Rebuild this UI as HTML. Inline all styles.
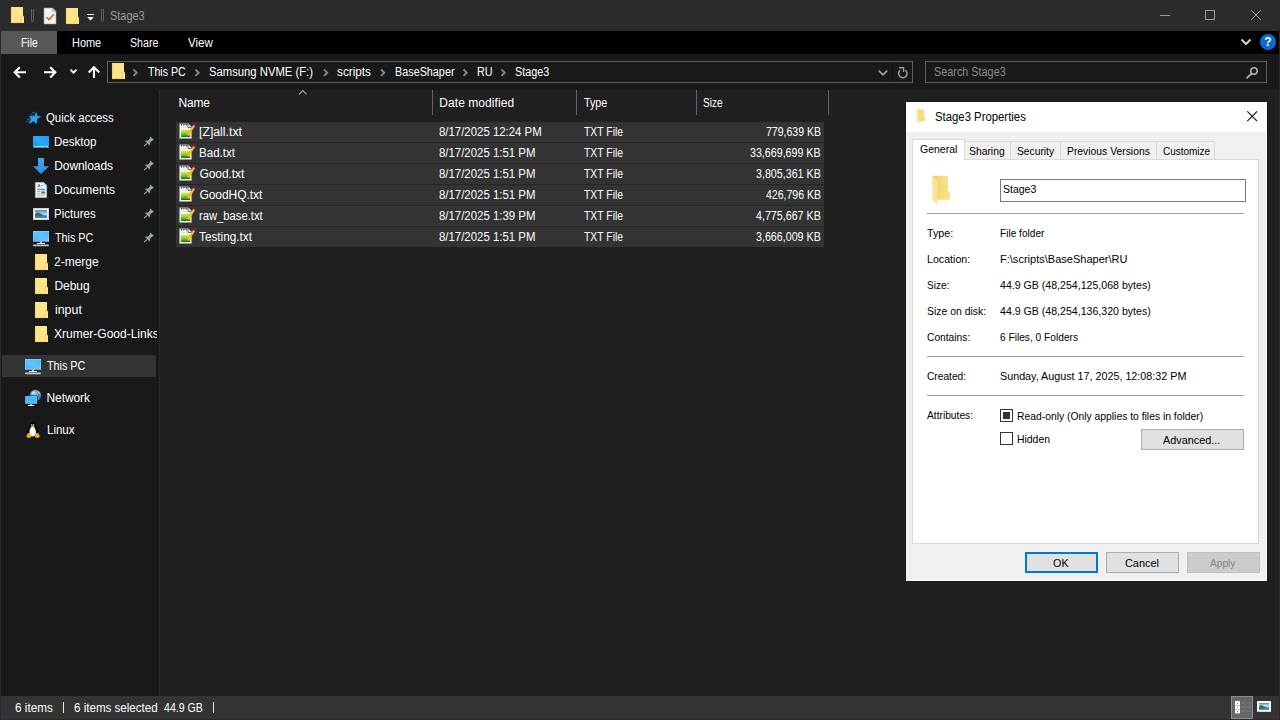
<!DOCTYPE html>
<html lang="en">
<head>
<meta charset="utf-8">
<title>Stage3</title>
<style>
*{box-sizing:border-box;margin:0;padding:0}
html,body{width:1280px;height:720px;overflow:hidden;background:#202020}
body{position:relative;font-family:"Liberation Sans",sans-serif;font-size:12px;color:#fff;line-height:16px}
.a{position:absolute}
.t{position:absolute;white-space:nowrap;line-height:16px;height:16px;transform-origin:0 0}
svg{position:absolute;overflow:visible}
#titlebar{left:0;top:0;width:1280px;height:31px;background:#2b2b2b}
#ribbon{left:1px;top:31px;width:1278px;height:23px;background:#000}
#filetab{left:1px;top:31px;width:56px;height:23px;background:#575757}
#navrow{left:1px;top:54px;width:1278px;height:36px;background:#191919}
#navpane{left:1px;top:90px;width:157px;height:606px;background:#191919;overflow:hidden}
#list{left:158px;top:90px;width:1121px;height:606px;background:#202020}
#status{left:1px;top:696px;width:1278px;height:23px;background:#333}
#frame{left:0;top:0;width:1280px;height:720px;border:1px solid #2b2b2b;border-top:0}
#addr{left:107px;top:61px;width:806px;height:22px;border:1px solid #5e5e5e}
#search{left:925px;top:61px;width:342px;height:22px;border:1px solid #5e5e5e}
.row{position:absolute;left:176px;width:648px;height:20px;background:#333}
.colsep{position:absolute;top:90px;width:1px;height:25px;background:#636363}
.navsel{left:2px;top:355px;width:154px;height:22px;background:#333}
#dlg{left:905px;top:101px;width:363px;height:481px;background:#181818}
#dlgin{left:1px;top:1px;width:361px;height:479px;background:#f0f0f0;border-right:1px solid #fff;border-bottom:1px solid #fff}
#dlgtitle{left:0;top:0;width:361px;height:30px;background:#fff}
.hr{position:absolute;left:927px;width:317px;height:1px;background:#a0a0a0}
.btn{position:absolute;height:21px;background:#e1e1e1;border:1px solid #adadad}
.cb{position:absolute;width:13px;height:13px;border:1px solid #333;background:#fff}
.tab{position:absolute;top:141px;height:18px;background:#f0f0f0;border:1px solid #d9d9d9;border-bottom:0}
</style>
</head>
<body>
<div class="a" id="titlebar"></div>
<div class="a" id="ribbon"></div>
<div class="a" id="filetab"></div>
<div class="a" id="navrow"></div>
<div class="a" id="navpane"></div>
<div class="a" id="list"></div>
<div class="a" id="status"></div>
<div class="a" id="frame"></div>
<div class="a" id="addr"></div>
<div class="a" id="search"></div>
<!-- title bar quick-access icons -->
<svg style="left:10px;top:6px" width="16" height="19" viewBox="0 0 16 19"><rect x="1" y="1" width="12" height="16" fill="#ffe48b"/><path d="M1.400 1v15.600H11" fill="none" stroke="#f5cd5a" stroke-width=".8"/><rect x="11.200" y="10.200" width="2.800" height="6.800" fill="#ffe793"/><path d="M11.200 17v-6.800h2.800" fill="none" stroke="#e6c25a" stroke-width=".7"/></svg>
<svg style="left:30px;top:8px" width="6" height="15" viewBox="0 0 6 15"><path d="M1.5 1v11.5a1 1 0 0 0 2 0V1" fill="none" stroke="#626262" stroke-width="1"/></svg>
<svg style="left:43px;top:7px" width="14" height="18" viewBox="0 0 14 18"><path d="M1 1h8.5l3.5 3.5V17H1z" fill="#f4f4f4" stroke="#9a9a9a" stroke-width=".6"/><path d="M9.5 1v3.5H13" fill="#dcdcdc" stroke="#9a9a9a" stroke-width=".6"/><path d="M3.3 10.2l2.6 2.4 5-5.4" fill="none" stroke="#f2581c" stroke-width="1.5"/></svg>
<svg style="left:65px;top:7px" width="16" height="19" viewBox="0 0 16 19"><rect x="1" y="1" width="12" height="16" fill="#ffe48b"/><path d="M1.400 1v15.600H11" fill="none" stroke="#f5cd5a" stroke-width=".8"/><rect x="11.200" y="10.200" width="2.800" height="6.800" fill="#ffe793"/><path d="M11.200 17v-6.800h2.800" fill="none" stroke="#e6c25a" stroke-width=".7"/></svg>
<svg style="left:86px;top:13px" width="9" height="9" viewBox="0 0 9 9"><rect x="1" y="1" width="7" height="1" fill="#fff"/><path d="M1.2 4h6.6L4.5 7.6z" fill="#fff"/></svg>
<svg style="left:100px;top:8px" width="6" height="15" viewBox="0 0 6 15"><path d="M1.5 1v11.5a1 1 0 0 0 2 0V1" fill="none" stroke="#626262" stroke-width="1"/></svg>
<!-- window controls -->
<svg style="left:1160px;top:10px" width="102" height="11" viewBox="0 0 102 11"><path d="M0 5.5h10" stroke="#9a9a9a" stroke-width="1"/><rect x="45.5" y=".5" width="9" height="9" fill="none" stroke="#9a9a9a" stroke-width="1"/><path d="M91 0l10 10M101 0L91 10" stroke="#9a9a9a" stroke-width="1"/></svg>
<!-- ribbon right -->
<svg style="left:1240px;top:38px" width="12" height="8" viewBox="0 0 12 8"><path d="M1.5 1.5L6 6l4.5-4.5" fill="none" stroke="#d4d4d4" stroke-width="2"/></svg>
<svg style="left:1260px;top:34px" width="16" height="16" viewBox="0 0 16 16"><circle cx="8" cy="8" r="8" fill="#0a6cd0"/><text x="8" y="12.3" font-family="Liberation Sans, sans-serif" font-size="12" font-weight="bold" fill="#fff" text-anchor="middle">?</text></svg>
<!-- nav arrows -->
<svg style="left:13px;top:66px" width="90" height="13" viewBox="0 0 90 13"><g fill="none" stroke="#fff" stroke-width="2.1"><path d="M13 6.3H2M6.8 1.2L1.7 6.3l5.1 5.1"/><path d="M31 6.3h11M37.2 1.2l5.100 5.1-5.100 5.100"/><path d="M81 12V1.500M75.700 6.500L81 1.200l5.300 5.300"/></g><path d="M57.500 3.600l3 3 3-3" fill="none" stroke="#f0f0f0" stroke-width="2"/></svg>
<!-- address bar folder + chevrons -->
<svg style="left:111px;top:62px" width="16" height="19" viewBox="0 0 16 19"><rect x="1" y="1" width="12" height="16" fill="#ffe48b"/><path d="M1.400 1v15.600H11" fill="none" stroke="#f5cd5a" stroke-width=".8"/><rect x="11.200" y="10.200" width="2.800" height="6.800" fill="#ffe793"/><path d="M11.200 17v-6.800h2.800" fill="none" stroke="#e6c25a" stroke-width=".7"/></svg>
<svg style="left:0;top:68px" width="560" height="10" viewBox="0 0 560 10"><g fill="none" stroke="#8a8a8a" stroke-width="1.800"><path d="M133.500 1.500l3.200 3.200-3.200 3.200"/><path d="M195.500 1.500l3.200 3.200-3.200 3.200"/><path d="M324 1.500l3.200 3.200-3.200 3.200"/><path d="M381 1.500l3.200 3.200-3.200 3.200"/><path d="M463.500 1.500l3.200 3.200-3.200 3.200"/><path d="M501.500 1.500l3.200 3.200-3.200 3.200"/></g></svg>
<!-- addr dropdown + refresh -->
<svg style="left:877px;top:66px" width="34" height="14" viewBox="0 0 34 14"><path d="M1.800 4.700l4.200 4.200 4.200-4.200" fill="none" stroke="#a2a2a2" stroke-width="1.700"/><path d="M15.500-4v20" stroke="#121212" stroke-width="1"/><path d="M28.300 4.100A4.200 4.200 0 1 1 23 4.400" fill="none" stroke="#9c9c9c" stroke-width="1.500"/><path d="M22.100 1.800H26.600V5.900" fill="none" stroke="#9c9c9c" stroke-width="1.400"/></svg>
<!-- search magnifier -->
<svg style="left:1245px;top:66px" width="14" height="14" viewBox="0 0 14 14"><circle cx="9" cy="5" r="3.200" fill="none" stroke="#b0b0b0" stroke-width="1.500"/><path d="M6.600 7.500L1.500 12.300" stroke="#b0b0b0" stroke-width="1.800"/></svg>
<!-- nav pane -->
<div class="a navsel"></div>
<div class="a" style="left:0;top:320px;width:157px;height:30px;overflow:hidden"><span class="t" style="left:54px;top:5.8px">Xrumer-Good-Links</span></div>
<svg style="left:26px;top:110px" width="17" height="16" viewBox="26 110 17 16"><path d="M36.5 111.6L37.3 115.9L41.3 116.2L37.1 119.0L36.7 123.9L33.4 121.2L29.0 123.9L30.9 119.0L28.7 116.2L34.3 115.9z" fill="#2aa5f4"/><path d="M32 112.400h3M30 114.400h3.500M27 119.400h3M26 121.500h3.500" stroke="#1878c0" stroke-width="1" opacity=".8"/></svg>
<svg style="left:33px;top:136px" width="16" height="12" viewBox="0 0 16 12"><defs><linearGradient id="gd" x1="0" y1="1" x2="1" y2="0"><stop offset="0" stop-color="#1598f4"/><stop offset=".5" stop-color="#29a8fb"/><stop offset="1" stop-color="#1b9ef8"/></linearGradient></defs><rect width="16" height="12" fill="url(#gd)"/><rect x="0" y="10" width="16" height="1.200" fill="#0f7fd6"/><rect x="2.500" y="10" width="9" height="1" fill="#a8dcff"/><rect x="1" y="10" width="1" height="1" fill="#fff"/><rect x="12.500" y="10" width="1" height="1" fill="#fff"/><rect x="14" y="10" width="1" height="1" fill="#fff"/></svg>
<svg style="left:33px;top:158px" width="16" height="16" viewBox="0 0 16 16"><defs><linearGradient id="gdl" x1="0" y1="0" x2="0" y2="1"><stop offset="0" stop-color="#4aa3ee"/><stop offset="1" stop-color="#2a8ae2"/></linearGradient></defs><path d="M5 0h6v8.300h5L8 16 0 8.300h5z" fill="url(#gdl)"/></svg>
<svg style="left:35px;top:182px" width="12" height="16" viewBox="0 0 12 16"><path d="M.4.400h8.200l3 3V15.600H.4z" fill="#fbfbfb" stroke="#b9b9b9" stroke-width=".8"/><path d="M8.600.400v3h3" fill="#e4e4e4" stroke="#b9b9b9" stroke-width=".6"/><path d="M2.600 5.300l1.300-3.200 1.300 3.200M3.100 4.200h1.700" fill="none" stroke="#1e7fd8" stroke-width=".9"/><rect x="5.800" y="3.300" width="2" height=".8" fill="#4a9be4"/><rect x="2" y="6.800" width="8" height="1.100" fill="#1e88e0"/><rect x="2" y="9" width="3.500" height=".9" fill="#a8a8a8"/><rect x="2" y="10.800" width="3.500" height=".9" fill="#a8a8a8"/><rect x="6.300" y="8.800" width="3.700" height="3" fill="#4d7f6a"/><rect x="6.300" y="8.800" width="3.700" height="1.200" fill="#7db6e8"/><rect x="2" y="12.800" width="8" height=".9" fill="#a8a8a8"/></svg>
<svg style="left:33px;top:208px" width="16" height="12" viewBox="0 0 16 12"><defs><linearGradient id="gsa" x1="0" y1="0" x2="0" y2="1"><stop offset="0" stop-color="#3f8fdc"/><stop offset=".55" stop-color="#bfe2f6"/><stop offset=".7" stop-color="#6f9fb8"/><stop offset="1" stop-color="#3b78b4"/></linearGradient></defs><rect width="16" height="12" fill="#f4f4f4"/><rect x=".4" y=".4" width="15.2" height="11.2" fill="none" stroke="#c9c9c9" stroke-width=".8"/><rect x="2" y="2" width="12" height="8" fill="url(#gsa)"/><path d="M2 6.200c1.500-1.800 3-2.300 4.500-1.300 1.600 1 3 1.300 5 2.300L8 8.300H2z" fill="#3c6a50"/><path d="M2 7.500c3 .3 6 .2 12 .2V10H2z" fill="#3f7db8" opacity=".85"/></svg>
<svg style="left:33px;top:231px" width="16" height="16" viewBox="0 0 16 16"><defs><linearGradient id="gpa" x1="0" y1="1" x2="1" y2="0"><stop offset="0" stop-color="#3fb0fb"/><stop offset=".5" stop-color="#62c4ff"/><stop offset="1" stop-color="#45b4fc"/></linearGradient></defs><rect x="0" y="0" width="16" height="10.500" fill="url(#gpa)"/><rect x=".4" y=".4" width="15.200" height="9.700" fill="none" stroke="#7ccfff" stroke-width=".8"/><rect x="7" y="10.500" width="2" height="1.800" fill="#b9c3cc"/><rect x="4" y="12" width="8" height="1" fill="#dfe5ea"/><rect x="0" y="13.600" width="16" height="1.600" rx=".8" fill="#c4ccd4"/></svg>
<svg style="left:25px;top:359px" width="16" height="16" viewBox="0 0 16 16"><defs><linearGradient id="gpb" x1="0" y1="1" x2="1" y2="0"><stop offset="0" stop-color="#3fb0fb"/><stop offset=".5" stop-color="#62c4ff"/><stop offset="1" stop-color="#45b4fc"/></linearGradient></defs><rect x="0" y="0" width="16" height="10.500" fill="url(#gpb)"/><rect x=".4" y=".4" width="15.200" height="9.700" fill="none" stroke="#7ccfff" stroke-width=".8"/><rect x="7" y="10.500" width="2" height="1.800" fill="#b9c3cc"/><rect x="4" y="12" width="8" height="1" fill="#dfe5ea"/><rect x="0" y="13.600" width="16" height="1.600" rx=".8" fill="#c4ccd4"/></svg>
<svg style="left:34px;top:253px" width="16" height="19" viewBox="0 0 16 19"><rect x="1" y="1" width="12" height="16" fill="#ffe48b"/><path d="M1.400 1v15.600H11" fill="none" stroke="#f5cd5a" stroke-width=".8"/><rect x="11.200" y="10.200" width="2.800" height="6.800" fill="#ffe793"/><path d="M11.200 17v-6.800h2.800" fill="none" stroke="#e6c25a" stroke-width=".7"/></svg>
<svg style="left:34px;top:277px" width="16" height="19" viewBox="0 0 16 19"><rect x="1" y="1" width="12" height="16" fill="#ffe48b"/><path d="M1.400 1v15.600H11" fill="none" stroke="#f5cd5a" stroke-width=".8"/><rect x="11.200" y="10.200" width="2.800" height="6.800" fill="#ffe793"/><path d="M11.200 17v-6.800h2.800" fill="none" stroke="#e6c25a" stroke-width=".7"/></svg>
<svg style="left:34px;top:301px" width="16" height="19" viewBox="0 0 16 19"><rect x="1" y="1" width="12" height="16" fill="#ffe48b"/><path d="M1.400 1v15.600H11" fill="none" stroke="#f5cd5a" stroke-width=".8"/><rect x="11.200" y="10.200" width="2.800" height="6.800" fill="#ffe793"/><path d="M11.200 17v-6.800h2.800" fill="none" stroke="#e6c25a" stroke-width=".7"/></svg>
<svg style="left:34px;top:325px" width="16" height="19" viewBox="0 0 16 19"><rect x="1" y="1" width="12" height="16" fill="#ffe48b"/><path d="M1.400 1v15.600H11" fill="none" stroke="#f5cd5a" stroke-width=".8"/><rect x="11.200" y="10.200" width="2.800" height="6.800" fill="#ffe793"/><path d="M11.200 17v-6.800h2.800" fill="none" stroke="#e6c25a" stroke-width=".7"/></svg>
<svg style="left:25px;top:389px" width="17" height="18" viewBox="0 0 17 18"><defs><radialGradient id="gg" cx=".38" cy=".3" r=".85"><stop offset="0" stop-color="#a8d8ee"/><stop offset=".45" stop-color="#4a98c4"/><stop offset="1" stop-color="#245f86"/></radialGradient></defs><circle cx="10.500" cy="6.500" r="5.700" fill="url(#gg)"/><path d="M6.600 4.100c1-.9 2.200-1.600 3.300-1.400-.3 1-1.600 1.300-2.200 2.300zM12.500 2.300c1.500.6 2.700 2 3 3.700-.9-.6-1.300-1.700-2.300-2.200z" fill="#eef9fd" opacity=".85"/><rect x="0" y="6.900" width="12.200" height="8.100" fill="#4bb7fb" stroke="#191919" stroke-width=".6"/><rect x=".9" y="7.800" width="10.400" height="6.300" fill="none" stroke="#7fd0ff" stroke-width=".6"/><rect x="5.300" y="15" width="1.600" height="1.200" fill="#c4ccd4"/><rect x="3.100" y="16" width="6" height="1" fill="#e3e8ec"/></svg>
<svg style="left:26px;top:422px" width="14" height="17" viewBox="0 0 14 17"><path d="M7 0c1.800 0 2.800 1.300 2.800 3.200 0 1.600 2 3.600 2.600 6.100.5 2.300-.3 4.400-1.600 5.400H3.200C1.900 13.700 1.100 11.600 1.600 9.300c.6-2.500 2.600-4.500 2.600-6.100C4.200 1.300 5.200 0 7 0z" fill="#000"/><path d="M6.700 4.600c1.700 0 3.200 2.600 3.300 5.600.1 2.600-1.300 4.200-3.300 4.200s-3.400-1.600-3.300-4.200c.1-3 1.600-5.600 3.300-5.600z" fill="#fdfdfd"/><ellipse cx="6.700" cy="4.300" rx="1.900" ry="1" fill="#f0b020"/><ellipse cx="5.700" cy="2.700" rx=".7" ry=".8" fill="#cfcfcf"/><ellipse cx="7.700" cy="2.700" rx=".7" ry=".8" fill="#cfcfcf"/><path d="M.5 14.300c.2-1.600 1.300-3.400 2.700-3.200 1.300.2 2.300 2.400 2 3.800-.3 1.400-4.900 1.200-4.700-.6z" fill="#f2ae14"/><path d="M13.700 14.300c-.2-1.600-1.300-3.400-2.700-3.200-1.300.2-2.300 2.400-2 3.800.3 1.400 4.900 1.200 4.700-.6z" fill="#f2ae14"/></svg>
<svg style="left:143px;top:136.0px" width="12" height="11" viewBox="143 136.500 12 11"><path d="M144.700 141.200l3.400-.2 1.700-1.900.3-2.100 4.100 3.600-2.100.6-1.800 1.600-.6 3.300z" fill="#9aa5ab"/><path d="M147.200 143.800l-3.100 2.900" stroke="#9aa5ab" stroke-width="1.150"/></svg>
<svg style="left:143px;top:160.0px" width="12" height="11" viewBox="143 136.500 12 11"><path d="M144.700 141.200l3.400-.2 1.700-1.900.3-2.100 4.100 3.600-2.100.6-1.800 1.600-.6 3.300z" fill="#9aa5ab"/><path d="M147.200 143.800l-3.100 2.900" stroke="#9aa5ab" stroke-width="1.150"/></svg>
<svg style="left:143px;top:184.0px" width="12" height="11" viewBox="143 136.500 12 11"><path d="M144.700 141.200l3.400-.2 1.700-1.900.3-2.100 4.100 3.600-2.100.6-1.800 1.600-.6 3.300z" fill="#9aa5ab"/><path d="M147.200 143.800l-3.100 2.900" stroke="#9aa5ab" stroke-width="1.150"/></svg>
<svg style="left:143px;top:208.0px" width="12" height="11" viewBox="143 136.500 12 11"><path d="M144.700 141.200l3.400-.2 1.700-1.900.3-2.100 4.100 3.600-2.100.6-1.800 1.600-.6 3.300z" fill="#9aa5ab"/><path d="M147.200 143.800l-3.100 2.900" stroke="#9aa5ab" stroke-width="1.150"/></svg>
<svg style="left:143px;top:232.0px" width="12" height="11" viewBox="143 136.500 12 11"><path d="M144.700 141.200l3.400-.2 1.700-1.900.3-2.100 4.100 3.600-2.100.6-1.800 1.600-.6 3.300z" fill="#9aa5ab"/><path d="M147.200 143.800l-3.100 2.900" stroke="#9aa5ab" stroke-width="1.150"/></svg>
<!-- splitter --><div class="a" style="left:157px;top:90px;width:1px;height:606px;background:#141414"></div><div class="a" style="left:158px;top:90px;width:1px;height:606px;background:#1c1c1c"></div><div class="a" style="left:159px;top:90px;width:1px;height:606px;background:#292929"></div>
<!-- file list -->
<div class="colsep" style="left:432px"></div>
<div class="colsep" style="left:576px"></div>
<div class="colsep" style="left:696px"></div>
<div class="colsep" style="left:828px"></div>
<svg style="left:298px;top:89px" width="10" height="7" viewBox="0 0 10 7"><path d="M1 5.300l3.800-3.800 3.800 3.800" fill="none" stroke="#a8a8a8" stroke-width="1.100"/></svg>
<div class="a" style="left:176px;top:122px;width:648px;height:125px;background:#262626"></div>
<div class="row" style="top:122px"></div>
<svg style="left:179px;top:122.6px" width="17" height="17" viewBox="0 0 17 17"><defs><linearGradient id="gn0" x1="0" y1="0" x2="0" y2="1"><stop offset="0" stop-color="#e4ea58"/><stop offset=".45" stop-color="#8fd638"/><stop offset=".8" stop-color="#2fa81c"/><stop offset="1" stop-color="#075c00"/></linearGradient></defs><path d="M.5.800h8.800l3.300 3.300V15.500H.5z" fill="#fdfdfd" stroke="#8f8f8f" stroke-width=".7"/><path d="M9 .800v3.600h3.600" fill="#fff" stroke="#4a4a4a" stroke-width=".9"/><path d="M1.600 1l.9 2.200.9-2.200zM4 1l.9 2.200.9-2.200zM6.400 1l.9 2.200.9-2.200z" fill="#4a4a4a"/><rect x="2" y="4.200" width="6" height=".7" fill="#b9d4e6"/><rect x="2" y="6.500" width="9.200" height="7.500" fill="url(#gn0)"/><path d="M13.300 3.200l1.900 1.200-5.300 8.300-2.500 1.600.6-2.800z" fill="#f7a800"/><path d="M13.900 3.600l.7.450-5.300 8.200-.7-.45z" fill="#ffd04a" opacity=".8"/><path d="M7.400 14.300l.5-2.200 1.500 1z" fill="#5a3a10"/><path d="M13.300 3.200l.9-1.400 1.900 1.200-.9 1.400z" fill="#b8cfe4"/><circle cx="15.400" cy="1.500" r="1.300" fill="#c40808"/></svg>
<div class="row" style="top:143px"></div>
<svg style="left:179px;top:143.6px" width="17" height="17" viewBox="0 0 17 17"><defs><linearGradient id="gn1" x1="0" y1="0" x2="0" y2="1"><stop offset="0" stop-color="#e4ea58"/><stop offset=".45" stop-color="#8fd638"/><stop offset=".8" stop-color="#2fa81c"/><stop offset="1" stop-color="#075c00"/></linearGradient></defs><path d="M.5.800h8.800l3.300 3.300V15.500H.5z" fill="#fdfdfd" stroke="#8f8f8f" stroke-width=".7"/><path d="M9 .800v3.600h3.600" fill="#fff" stroke="#4a4a4a" stroke-width=".9"/><path d="M1.600 1l.9 2.200.9-2.200zM4 1l.9 2.200.9-2.200zM6.400 1l.9 2.200.9-2.200z" fill="#4a4a4a"/><rect x="2" y="4.200" width="6" height=".7" fill="#b9d4e6"/><rect x="2" y="6.500" width="9.200" height="7.500" fill="url(#gn1)"/><path d="M13.300 3.200l1.900 1.200-5.300 8.300-2.500 1.600.6-2.800z" fill="#f7a800"/><path d="M13.900 3.600l.7.450-5.300 8.200-.7-.45z" fill="#ffd04a" opacity=".8"/><path d="M7.400 14.300l.5-2.200 1.500 1z" fill="#5a3a10"/><path d="M13.300 3.200l.9-1.400 1.900 1.200-.9 1.400z" fill="#b8cfe4"/><circle cx="15.400" cy="1.500" r="1.300" fill="#c40808"/></svg>
<div class="row" style="top:164px"></div>
<svg style="left:179px;top:164.6px" width="17" height="17" viewBox="0 0 17 17"><defs><linearGradient id="gn2" x1="0" y1="0" x2="0" y2="1"><stop offset="0" stop-color="#e4ea58"/><stop offset=".45" stop-color="#8fd638"/><stop offset=".8" stop-color="#2fa81c"/><stop offset="1" stop-color="#075c00"/></linearGradient></defs><path d="M.5.800h8.800l3.300 3.300V15.500H.5z" fill="#fdfdfd" stroke="#8f8f8f" stroke-width=".7"/><path d="M9 .800v3.600h3.600" fill="#fff" stroke="#4a4a4a" stroke-width=".9"/><path d="M1.600 1l.9 2.200.9-2.200zM4 1l.9 2.200.9-2.200zM6.400 1l.9 2.200.9-2.200z" fill="#4a4a4a"/><rect x="2" y="4.200" width="6" height=".7" fill="#b9d4e6"/><rect x="2" y="6.500" width="9.200" height="7.500" fill="url(#gn2)"/><path d="M13.300 3.200l1.900 1.200-5.300 8.300-2.500 1.600.6-2.800z" fill="#f7a800"/><path d="M13.900 3.600l.7.450-5.300 8.200-.7-.45z" fill="#ffd04a" opacity=".8"/><path d="M7.400 14.300l.5-2.200 1.500 1z" fill="#5a3a10"/><path d="M13.300 3.200l.9-1.400 1.900 1.200-.9 1.400z" fill="#b8cfe4"/><circle cx="15.400" cy="1.500" r="1.300" fill="#c40808"/></svg>
<div class="row" style="top:185px"></div>
<svg style="left:179px;top:185.6px" width="17" height="17" viewBox="0 0 17 17"><defs><linearGradient id="gn3" x1="0" y1="0" x2="0" y2="1"><stop offset="0" stop-color="#e4ea58"/><stop offset=".45" stop-color="#8fd638"/><stop offset=".8" stop-color="#2fa81c"/><stop offset="1" stop-color="#075c00"/></linearGradient></defs><path d="M.5.800h8.800l3.300 3.300V15.500H.5z" fill="#fdfdfd" stroke="#8f8f8f" stroke-width=".7"/><path d="M9 .800v3.600h3.600" fill="#fff" stroke="#4a4a4a" stroke-width=".9"/><path d="M1.600 1l.9 2.200.9-2.200zM4 1l.9 2.200.9-2.200zM6.400 1l.9 2.200.9-2.200z" fill="#4a4a4a"/><rect x="2" y="4.200" width="6" height=".7" fill="#b9d4e6"/><rect x="2" y="6.500" width="9.200" height="7.500" fill="url(#gn3)"/><path d="M13.300 3.200l1.900 1.200-5.300 8.300-2.500 1.600.6-2.800z" fill="#f7a800"/><path d="M13.900 3.600l.7.450-5.300 8.200-.7-.45z" fill="#ffd04a" opacity=".8"/><path d="M7.400 14.300l.5-2.200 1.500 1z" fill="#5a3a10"/><path d="M13.300 3.200l.9-1.400 1.900 1.200-.9 1.400z" fill="#b8cfe4"/><circle cx="15.400" cy="1.500" r="1.300" fill="#c40808"/></svg>
<div class="row" style="top:206px"></div>
<svg style="left:179px;top:206.6px" width="17" height="17" viewBox="0 0 17 17"><defs><linearGradient id="gn4" x1="0" y1="0" x2="0" y2="1"><stop offset="0" stop-color="#e4ea58"/><stop offset=".45" stop-color="#8fd638"/><stop offset=".8" stop-color="#2fa81c"/><stop offset="1" stop-color="#075c00"/></linearGradient></defs><path d="M.5.800h8.800l3.300 3.300V15.500H.5z" fill="#fdfdfd" stroke="#8f8f8f" stroke-width=".7"/><path d="M9 .800v3.600h3.600" fill="#fff" stroke="#4a4a4a" stroke-width=".9"/><path d="M1.600 1l.9 2.200.9-2.200zM4 1l.9 2.200.9-2.200zM6.400 1l.9 2.200.9-2.200z" fill="#4a4a4a"/><rect x="2" y="4.200" width="6" height=".7" fill="#b9d4e6"/><rect x="2" y="6.500" width="9.200" height="7.500" fill="url(#gn4)"/><path d="M13.300 3.200l1.900 1.200-5.300 8.300-2.500 1.600.6-2.800z" fill="#f7a800"/><path d="M13.900 3.600l.7.450-5.300 8.200-.7-.45z" fill="#ffd04a" opacity=".8"/><path d="M7.400 14.300l.5-2.200 1.500 1z" fill="#5a3a10"/><path d="M13.300 3.200l.9-1.400 1.900 1.200-.9 1.400z" fill="#b8cfe4"/><circle cx="15.400" cy="1.500" r="1.300" fill="#c40808"/></svg>
<div class="row" style="top:227px"></div>
<svg style="left:179px;top:227.6px" width="17" height="17" viewBox="0 0 17 17"><defs><linearGradient id="gn5" x1="0" y1="0" x2="0" y2="1"><stop offset="0" stop-color="#e4ea58"/><stop offset=".45" stop-color="#8fd638"/><stop offset=".8" stop-color="#2fa81c"/><stop offset="1" stop-color="#075c00"/></linearGradient></defs><path d="M.5.800h8.800l3.300 3.300V15.500H.5z" fill="#fdfdfd" stroke="#8f8f8f" stroke-width=".7"/><path d="M9 .800v3.600h3.600" fill="#fff" stroke="#4a4a4a" stroke-width=".9"/><path d="M1.600 1l.9 2.200.9-2.200zM4 1l.9 2.200.9-2.200zM6.400 1l.9 2.200.9-2.200z" fill="#4a4a4a"/><rect x="2" y="4.200" width="6" height=".7" fill="#b9d4e6"/><rect x="2" y="6.500" width="9.200" height="7.500" fill="url(#gn5)"/><path d="M13.300 3.200l1.900 1.200-5.300 8.300-2.500 1.600.6-2.800z" fill="#f7a800"/><path d="M13.900 3.600l.7.450-5.300 8.200-.7-.45z" fill="#ffd04a" opacity=".8"/><path d="M7.400 14.300l.5-2.200 1.500 1z" fill="#5a3a10"/><path d="M13.300 3.200l.9-1.400 1.900 1.200-.9 1.400z" fill="#b8cfe4"/><circle cx="15.400" cy="1.500" r="1.300" fill="#c40808"/></svg>
<!-- status bar -->
<div class="a" style="left:63px;top:702px;width:1px;height:11px;background:#e8e8e8"></div>
<div class="a" style="left:213px;top:702px;width:1px;height:11px;background:#e8e8e8"></div>
<div class="a" style="left:1231px;top:696px;width:22px;height:23px;background:#666;border:1px solid #8c8c8c"></div>
<svg style="left:1235px;top:701px" width="17" height="13" viewBox="0 0 17 13"><rect x="0" y="0" width="5" height="12.400" fill="#fff"/><rect x="0" y="4" width="5" height=".5" fill="#999"/><rect x="0" y="8" width="5" height=".5" fill="#999"/><circle cx="2.500" cy="2.100" r=".65" fill="#3d7b5a"/><circle cx="2.500" cy="6.200" r=".65" fill="#4a8ff0"/><circle cx="2.500" cy="10.300" r=".65" fill="#d02020"/><g fill="#7c7c7c"><rect x="6" y="1.700" width="4" height=".9"/><rect x="12" y="1.700" width="4" height=".9"/><rect x="6" y="5.800" width="4" height=".9"/><rect x="12" y="5.800" width="4" height=".9"/><rect x="6" y="9.800" width="4" height=".9"/><rect x="12" y="9.800" width="4" height=".9"/></g></svg>
<svg style="left:1257px;top:701px" width="14" height="11" viewBox="0 0 14 11"><defs><linearGradient id="gv" x1="0" y1="0" x2="0" y2="1"><stop offset="0" stop-color="#3f8fe8"/><stop offset=".45" stop-color="#cfe8f8"/><stop offset=".7" stop-color="#5f93a8"/><stop offset="1" stop-color="#2f68b0"/></linearGradient></defs><rect width="14" height="10.800" fill="#fafafa"/><rect x="2" y="2" width="10" height="6.800" fill="url(#gv)"/><path d="M2 5.600c1.200-1.500 2.500-1.700 3.600-.9 1.300.8 2.200 1 3.900 1.800L7 7.600H2z" fill="#3a6a4c"/></svg>
<!-- properties dialog -->
<div class="a" id="dlg"><div class="a" id="dlgin"><div class="a" id="dlgtitle"></div></div></div>
<div class="a" style="left:912px;top:159px;width:347px;height:385px;background:#fff;border:1px solid #d9d9d9"></div>
<div class="tab" style="left:964px;width:47px"></div>
<div class="tab" style="left:1010px;width:51px"></div>
<div class="tab" style="left:1060px;width:97px"></div>
<div class="tab" style="left:1156px;width:59px"></div>
<div class="tab" style="left:912px;top:139px;width:53px;height:21px;background:#fff"></div>
<div class="a" style="left:1000px;top:179px;width:246px;height:23px;background:#fff;border:1px solid #7a7a7a"></div>
<div class="hr" style="top:213px"></div>
<div class="hr" style="top:356px"></div>
<div class="hr" style="top:395px"></div>
<div class="cb" style="left:1000px;top:409px"><div class="a" style="left:2px;top:2px;width:7px;height:7px;background:#333"></div></div>
<div class="cb" style="left:1000px;top:432px"></div>
<div class="btn" style="left:1141px;top:429px;width:103px"></div>
<div class="btn" style="left:1025px;top:552px;width:73px;border:2px solid #0078d7"></div>
<div class="btn" style="left:1106px;top:552px;width:73px"></div>
<div class="btn" style="left:1187px;top:552px;width:73px;background:#ccc;border-color:#bfbfbf"></div>
<svg style="left:931px;top:175px" width="20" height="30" viewBox="0 0 20 30"><defs><linearGradient id="go1" x1="0" y1="0" x2="1" y2="0"><stop offset="0" stop-color="#f2d069"/><stop offset="1" stop-color="#fce38f"/></linearGradient></defs><path d="M1.300.800H17V15.800l2 .8v8.100H6z" fill="url(#go1)"/><path d="M1.300.800l5.300 5.300-.4 22.800-4.900-3.600z" fill="#fbe399"/></svg>
<svg style="left:915.7px;top:109.4px" width="10" height="15" viewBox="0 0 20 30"><defs><linearGradient id="go2" x1="0" y1="0" x2="1" y2="0"><stop offset="0" stop-color="#f2d069"/><stop offset="1" stop-color="#fce38f"/></linearGradient></defs><path d="M1.300.800H17V15.800l2 .8v8.100H6z" fill="url(#go2)"/><path d="M1.300.800l5.300 5.300-.4 22.800-4.900-3.600z" fill="#fbe399"/></svg>
<svg style="left:1247px;top:111px" width="11" height="11" viewBox="0 0 11 11"><path d="M.3.300l9.800 9.800M10.100.300L.3 10.100" stroke="#111" stroke-width="1.100"/></svg>

<!-- text -->
<span class="t" style="left:110.00px;top:8.00px;color:#9d9d9d;transform:scaleX(0.9124)">Stage3</span>
<span class="t" style="left:20.50px;top:35.00px;color:#ffffff;transform:scaleX(0.8646)">File</span>
<span class="t" style="left:71.50px;top:35.00px;color:#ffffff;transform:scaleX(0.9123)">Home</span>
<span class="t" style="left:130.30px;top:35.00px;color:#ffffff;transform:scaleX(0.8872)">Share</span>
<span class="t" style="left:188.00px;top:35.00px;color:#ffffff;transform:scaleX(0.9645)">View</span>
<span class="t" style="left:147.75px;top:64.00px;color:#ffffff;transform:scaleX(0.8801)">This PC</span>
<span class="t" style="left:209.00px;top:64.00px;color:#ffffff;transform:scaleX(0.9395)">Samsung NVME (F:)</span>
<span class="t" style="left:337.00px;top:64.00px;color:#ffffff;transform:scaleX(0.9807)">scripts</span>
<span class="t" style="left:394.50px;top:64.00px;color:#ffffff;transform:scaleX(0.9008)">BaseShaper</span>
<span class="t" style="left:477.00px;top:64.00px;color:#ffffff;transform:scaleX(0.9000)">RU</span>
<span class="t" style="left:515.00px;top:64.00px;color:#ffffff;transform:scaleX(0.8994)">Stage3</span>
<span class="t" style="left:934.00px;top:64.25px;color:#8c8c8c;transform:scaleX(0.9032)">Search Stage3</span>
<span class="t" style="left:46.25px;top:110.00px;color:#ffffff;transform:scaleX(0.9495)">Quick access</span>
<span class="t" style="left:54.25px;top:134.00px;color:#ffffff;transform:scaleX(0.9640)">Desktop</span>
<span class="t" style="left:54.25px;top:158.00px;color:#ffffff;letter-spacing:-0.077px">Downloads</span>
<span class="t" style="left:54.25px;top:182.00px;color:#ffffff;letter-spacing:0.007px">Documents</span>
<span class="t" style="left:54.25px;top:206.00px;color:#ffffff;transform:scaleX(0.9631)">Pictures</span>
<span class="t" style="left:54.50px;top:230.00px;color:#ffffff;transform:scaleX(0.8952)">This PC</span>
<span class="t" style="left:54.00px;top:254.00px;color:#ffffff;letter-spacing:-0.002px">2-merge</span>
<span class="t" style="left:54.50px;top:278.00px;color:#ffffff;letter-spacing:-0.047px">Debug</span>
<span class="t" style="left:54.50px;top:302.00px;color:#ffffff;transform:scaleX(1.0304)">input</span>
<span class="t" style="left:46.50px;top:358.00px;color:#ffffff;transform:scaleX(0.8952)">This PC</span>
<span class="t" style="left:46.50px;top:390.00px;color:#ffffff;letter-spacing:-0.085px">Network</span>
<span class="t" style="left:46.50px;top:422.00px;color:#ffffff;transform:scaleX(0.9586)">Linux</span>
<span class="t" style="left:178.40px;top:94.75px;color:#ffffff;letter-spacing:-0.145px">Name</span>
<span class="t" style="left:439.30px;top:94.75px;color:#ffffff;letter-spacing:0.061px">Date modified</span>
<span class="t" style="left:583.50px;top:94.75px;color:#ffffff;transform:scaleX(0.8921)">Type</span>
<span class="t" style="left:703.00px;top:94.75px;color:#ffffff;transform:scaleX(0.8450)">Size</span>
<span class="t" style="left:199.40px;top:124.10px;color:#ffffff;transform:scaleX(1.0218)">[Z]all.txt</span>
<span class="t" style="left:439.30px;top:124.10px;color:#ffffff;transform:scaleX(0.9502)">8/17/2025 12:24 PM</span>
<span class="t" style="left:583.50px;top:124.10px;color:#ffffff;transform:scaleX(0.8651)">TXT File</span>
<span class="t" style="left:766.00px;top:124.10px;color:#ffffff;transform:scaleX(0.8770)">779,639 KB</span>
<span class="t" style="left:199.40px;top:145.10px;color:#ffffff;transform:scaleX(0.9627)">Bad.txt</span>
<span class="t" style="left:439.30px;top:145.10px;color:#ffffff;transform:scaleX(0.9506)">8/17/2025 1:51 PM</span>
<span class="t" style="left:583.50px;top:145.10px;color:#ffffff;transform:scaleX(0.8651)">TXT File</span>
<span class="t" style="left:750.40px;top:145.10px;color:#ffffff;transform:scaleX(0.8892)">33,669,699 KB</span>
<span class="t" style="left:199.40px;top:166.10px;color:#ffffff;letter-spacing:-0.060px">Good.txt</span>
<span class="t" style="left:439.30px;top:166.10px;color:#ffffff;transform:scaleX(0.9506)">8/17/2025 1:51 PM</span>
<span class="t" style="left:583.50px;top:166.10px;color:#ffffff;transform:scaleX(0.8651)">TXT File</span>
<span class="t" style="left:756.20px;top:166.10px;color:#ffffff;transform:scaleX(0.8911)">3,805,361 KB</span>
<span class="t" style="left:199.40px;top:187.10px;color:#ffffff;letter-spacing:-0.047px">GoodHQ.txt</span>
<span class="t" style="left:439.30px;top:187.10px;color:#ffffff;transform:scaleX(0.9506)">8/17/2025 1:51 PM</span>
<span class="t" style="left:583.50px;top:187.10px;color:#ffffff;transform:scaleX(0.8651)">TXT File</span>
<span class="t" style="left:766.00px;top:187.10px;color:#ffffff;transform:scaleX(0.8770)">426,796 KB</span>
<span class="t" style="left:199.40px;top:208.10px;color:#ffffff;transform:scaleX(0.9367)">raw_base.txt</span>
<span class="t" style="left:439.30px;top:208.10px;color:#ffffff;transform:scaleX(0.9506)">8/17/2025 1:39 PM</span>
<span class="t" style="left:583.50px;top:208.10px;color:#ffffff;transform:scaleX(0.8651)">TXT File</span>
<span class="t" style="left:756.20px;top:208.10px;color:#ffffff;transform:scaleX(0.8911)">4,775,667 KB</span>
<span class="t" style="left:199.40px;top:229.10px;color:#ffffff;transform:scaleX(0.9801)">Testing.txt</span>
<span class="t" style="left:439.30px;top:229.10px;color:#ffffff;transform:scaleX(0.9506)">8/17/2025 1:51 PM</span>
<span class="t" style="left:583.50px;top:229.10px;color:#ffffff;transform:scaleX(0.8651)">TXT File</span>
<span class="t" style="left:756.20px;top:229.10px;color:#ffffff;transform:scaleX(0.8911)">3,666,009 KB</span>
<span class="t" style="left:15.00px;top:700.00px;color:#ffffff;transform:scaleX(0.9825)">6 items</span>
<span class="t" style="left:74.00px;top:700.00px;color:#ffffff;transform:scaleX(0.9647)">6 items selected</span>
<span class="t" style="left:163.70px;top:700.00px;color:#ffffff;transform:scaleX(0.8813)">44.9 GB</span>
<span class="t" style="left:935.00px;top:108.80px;color:#000000;transform:scaleX(0.9453)">Stage3 Properties</span>
<span class="t" style="left:919.50px;top:140.80px;color:#000000;transform:scaleX(0.8888);font-size:11.8px">General</span>
<span class="t" style="left:969.00px;top:142.70px;color:#000000;transform:scaleX(0.8778);font-size:11.8px">Sharing</span>
<span class="t" style="left:1017.20px;top:142.70px;color:#000000;transform:scaleX(0.8709);font-size:11.8px">Security</span>
<span class="t" style="left:1067.40px;top:142.70px;color:#000000;transform:scaleX(0.8770);font-size:11.8px">Previous Versions</span>
<span class="t" style="left:1162.50px;top:142.70px;color:#000000;transform:scaleX(0.8457);font-size:11.8px">Customize</span>
<span class="t" style="left:1003.00px;top:180.60px;color:#000000;transform:scaleX(0.8909);font-size:11.8px">Stage3</span>
<span class="t" style="left:927.40px;top:224.70px;color:#000000;transform:scaleX(0.9064);font-size:11.8px">Type:</span>
<span class="t" style="left:1000.20px;top:224.70px;color:#000000;transform:scaleX(0.8580);font-size:11.8px">File folder</span>
<span class="t" style="left:927.40px;top:250.80px;color:#000000;transform:scaleX(0.9033);font-size:11.8px">Location:</span>
<span class="t" style="left:1000.20px;top:250.80px;color:#000000;transform:scaleX(0.9349);font-size:11.8px">F:\scripts\BaseShaper\RU</span>
<span class="t" style="left:927.40px;top:276.90px;color:#000000;transform:scaleX(0.8478);font-size:11.8px">Size:</span>
<span class="t" style="left:1000.20px;top:276.90px;color:#000000;transform:scaleX(0.8978);font-size:11.8px">44.9 GB (48,254,125,068 bytes)</span>
<span class="t" style="left:927.40px;top:302.90px;color:#000000;transform:scaleX(0.8828);font-size:11.8px">Size on disk:</span>
<span class="t" style="left:1000.20px;top:302.90px;color:#000000;transform:scaleX(0.8978);font-size:11.8px">44.9 GB (48,254,136,320 bytes)</span>
<span class="t" style="left:927.40px;top:328.70px;color:#000000;transform:scaleX(0.8676);font-size:11.8px">Contains:</span>
<span class="t" style="left:1000.20px;top:328.70px;color:#000000;transform:scaleX(0.8622);font-size:11.8px">6 Files, 0 Folders</span>
<span class="t" style="left:927.40px;top:367.70px;color:#000000;transform:scaleX(0.8628);font-size:11.8px">Created:</span>
<span class="t" style="left:1000.20px;top:367.70px;color:#000000;transform:scaleX(0.9117);font-size:11.8px">Sunday, August 17, 2025, 12:08:32 PM</span>
<span class="t" style="left:927.40px;top:406.75px;color:#000000;transform:scaleX(0.8669);font-size:11.8px">Attributes:</span>
<span class="t" style="left:1016.60px;top:407.50px;color:#000000;transform:scaleX(0.8762);font-size:11.8px">Read-only (Only applies to files in folder)</span>
<span class="t" style="left:1016.50px;top:431.00px;color:#000000;transform:scaleX(0.8826);font-size:11.8px">Hidden</span>
<span class="t" style="left:1163.30px;top:431.75px;color:#000000;transform:scaleX(0.9190);font-size:11.8px">Advanced...</span>
<span class="t" style="left:1053.30px;top:554.70px;color:#000000;transform:scaleX(0.9141);font-size:11.8px">OK</span>
<span class="t" style="left:1125.20px;top:554.80px;color:#000000;transform:scaleX(0.9224);font-size:11.8px">Cancel</span>
<span class="t" style="left:1210.00px;top:554.80px;color:#838383;transform:scaleX(0.8612);font-size:11.8px">Apply</span>
</body>
</html>
